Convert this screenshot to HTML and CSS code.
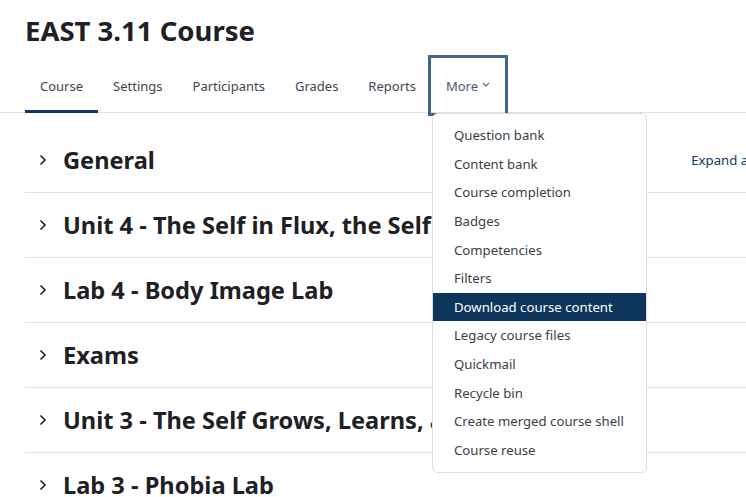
FILE: index.html
```html
<!DOCTYPE html>
<html lang="en">
<head>
<meta charset="utf-8">
<title>EAST 3.11 Course</title>
<link rel="stylesheet" href="styles.css">
</head>
<body>
<div class="page">
  <header class="page-header">
    <h1 class="course-title">EAST 3.11 Course</h1>
  </header>
  <nav class="secondary-nav">
    <ul class="nav-list">
      <li><a class="nav-link active" href="#">Course</a></li>
      <li><a class="nav-link" href="#">Settings</a></li>
      <li><a class="nav-link" href="#">Participants</a></li>
      <li><a class="nav-link" href="#">Grades</a></li>
      <li><a class="nav-link" href="#">Reports</a></li>
      <li class="more-item">
        <a class="nav-link focused" href="#">More<svg class="caret" width="8" height="5" viewBox="0 0 8 5"><path d="M1 1 L4 4 L7 1" fill="none" stroke="#5a6470" stroke-width="1.1"/></svg></a>
        <ul class="dropdown">
          <li><a class="dropdown-item" href="#">Question bank</a></li>
          <li><a class="dropdown-item" href="#">Content bank</a></li>
          <li><a class="dropdown-item" href="#">Course completion</a></li>
          <li><a class="dropdown-item" href="#">Badges</a></li>
          <li><a class="dropdown-item" href="#">Competencies</a></li>
          <li><a class="dropdown-item" href="#">Filters</a></li>
          <li><a class="dropdown-item selected" href="#">Download course content</a></li>
          <li><a class="dropdown-item" href="#">Legacy course files</a></li>
          <li><a class="dropdown-item" href="#">Quickmail</a></li>
          <li><a class="dropdown-item" href="#">Recycle bin</a></li>
          <li><a class="dropdown-item" href="#">Create merged course shell</a></li>
          <li><a class="dropdown-item" href="#">Course reuse</a></li>
        </ul>
      </li>
    </ul>
  </nav>
  <main class="sections">
    <div class="section">
      <svg class="chev" width="8" height="12" viewBox="0 0 8 12"><path d="M1.5 1.5 L6 6 L1.5 10.5" fill="none" stroke="#1d2125" stroke-width="1.6"/></svg>
      <h3 class="section-name">General</h3>
      <a class="expand-all" href="#">Expand all</a>
    </div>
    <div class="section">
      <svg class="chev" width="8" height="12" viewBox="0 0 8 12"><path d="M1.5 1.5 L6 6 L1.5 10.5" fill="none" stroke="#1d2125" stroke-width="1.6"/></svg>
      <h3 class="section-name">Unit 4 - The Self in Flux, the Self in the Future</h3>
    </div>
    <div class="section">
      <svg class="chev" width="8" height="12" viewBox="0 0 8 12"><path d="M1.5 1.5 L6 6 L1.5 10.5" fill="none" stroke="#1d2125" stroke-width="1.6"/></svg>
      <h3 class="section-name">Lab 4 - Body Image Lab</h3>
    </div>
    <div class="section">
      <svg class="chev" width="8" height="12" viewBox="0 0 8 12"><path d="M1.5 1.5 L6 6 L1.5 10.5" fill="none" stroke="#1d2125" stroke-width="1.6"/></svg>
      <h3 class="section-name">Exams</h3>
    </div>
    <div class="section">
      <svg class="chev" width="8" height="12" viewBox="0 0 8 12"><path d="M1.5 1.5 L6 6 L1.5 10.5" fill="none" stroke="#1d2125" stroke-width="1.6"/></svg>
      <h3 class="section-name">Unit 3 - The Self Grows, Learns, and Changes</h3>
    </div>
    <div class="section">
      <svg class="chev" width="8" height="12" viewBox="0 0 8 12"><path d="M1.5 1.5 L6 6 L1.5 10.5" fill="none" stroke="#1d2125" stroke-width="1.6"/></svg>
      <h3 class="section-name">Lab 3 - Phobia Lab</h3>
    </div>
  </main>
</div>
</body>
</html>
```

FILE: styles.css
```css
html, body {
  margin: 0;
  padding: 0;
  overflow: hidden;
  background: #ffffff;
}
body {
  font-family: "Noto Sans", "Open Sans", sans-serif;
  color: #1d2125;
  width: 746px;
  height: 497px;
}
.page {
  position: relative;
  width: 746px;
}
.page-header {
  padding: 13px 0 0 25px;
}
.course-title {
  margin: 0;
  font-size: 27.5px;
  line-height: 36px;
  font-weight: 700;
  color: #1d2125;
}
.secondary-nav {
  margin-top: 9px;
  border-bottom: 1px solid #dee2e6;
  padding-left: 25px;
}
.nav-list {
  list-style: none;
  margin: 0;
  padding: 0;
  display: flex;
}
.nav-list > li {
  position: relative;
}
.nav-link {
  display: flex;
  align-items: center;
  height: 55px;
  padding: 0 15px;
  box-sizing: border-box;
  font-size: 13px;
  color: #3c4650;
  text-decoration: none;
  border-bottom: 3px solid transparent;
  padding-top: 3px;
  margin-bottom: -1px;
}
.nav-link.active {
  border-bottom-color: #0f375f;
}
.nav-link.focused {
  outline: 3px solid #44648a;
  outline-offset: 0;
  color: #4c5866;
}
.caret {
  margin-left: 4px;
  margin-top: -2px;
}
.dropdown {
  position: absolute;
  z-index: 10;
  left: 1px;
  top: 55px;
  width: 215px;
  box-sizing: border-box;
  margin: 0;
  padding: 7px 0 7px;
  list-style: none;
  background: #ffffff;
  border: 1px solid #dadde1;
  border-radius: 6px;
}
.dropdown-item {
  display: block;
  padding: 4px 0 4px 21px;
  line-height: 20.64px;
  font-size: 13.2px;
  color: #3a3f44;
  text-decoration: none;
  white-space: nowrap;
}
.dropdown-item.selected {
  background: #0e365d;
  color: #ffffff;
}
.sections {
  margin-left: 25px;
  width: 760px;
  padding-top: 15px;
}
.section {
  display: flex;
  align-items: center;
  height: 64px;
  border-bottom: 1px solid #dee2e6;
  white-space: nowrap;
}
.chev {
  margin-left: 14px;
  margin-right: 16px;
  flex: none;
}
.section-name {
  margin: 0;
  font-size: 23.6px;
  font-weight: 700;
  color: #1d2125;
}
.expand-all {
  margin-left: auto;
  margin-right: 30px;
  font-size: 13.2px;
  color: #0f375f;
  text-decoration: none;
}
```
